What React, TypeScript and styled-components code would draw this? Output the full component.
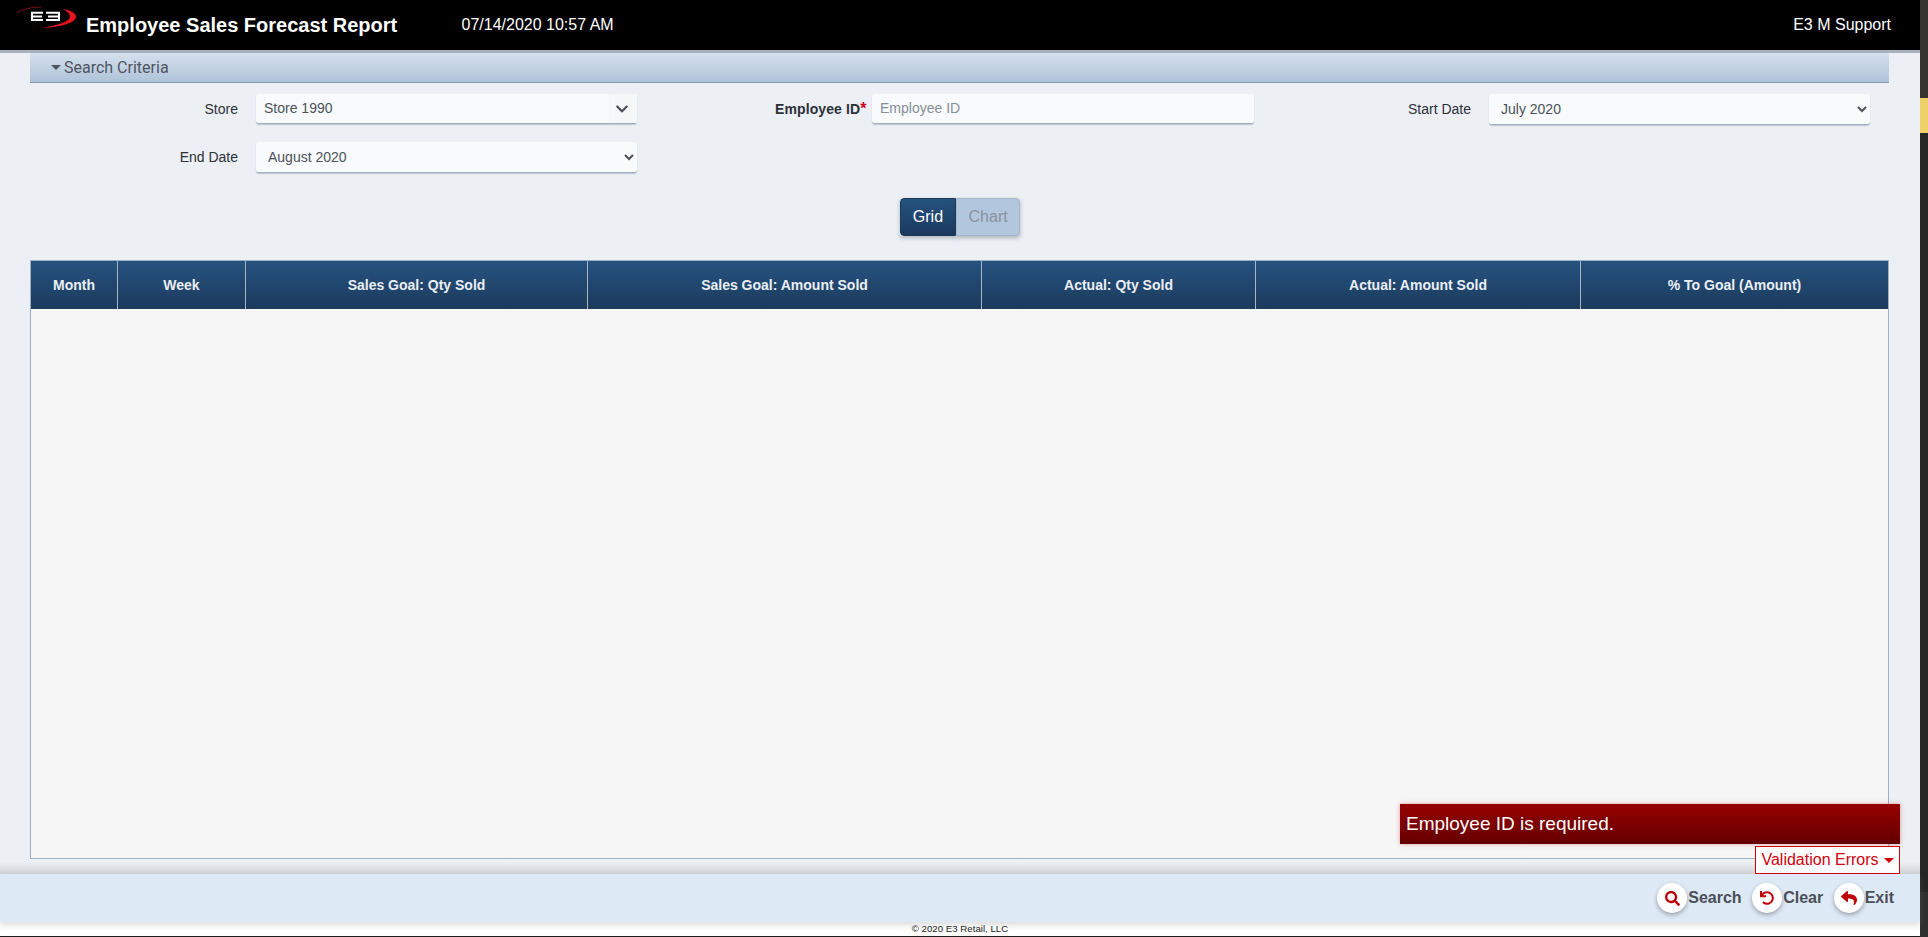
import React from "react";
import styled, { createGlobalStyle } from "styled-components";
import { FaChevronDown, FaSearch, FaUndo, FaReply } from "react-icons/fa";

const Global = createGlobalStyle`
  html, body { margin: 0; padding: 0; height: 100%; overflow: hidden; }
  body { font-family: "Liberation Sans", Arial, sans-serif; background: #fff; }
  #root { height: 100%; }
`;

const Shell = styled.div`
  display: flex;
  width: 1928px;
  height: 937px;
`;
const Page = styled.div`
  width: 1920px;
  display: flex;
  flex-direction: column;
  background: #eceff4;
  position: relative;
`;
const Gutter = styled.div`
  width: 8px;
  display: flex;
  flex-direction: column;
  background: #262626;
`;
const GutterTop = styled.div`
  height: 98px;
  background: #37352f;
`;
const GutterMark = styled.div`
  height: 35px;
  background: #f0d068;
`;
const GutterRest = styled.div`
  flex: 1;
`;
const GutterBottom = styled.div`
  height: 45px;
  background: #2f2f2f;
`;
const Header = styled.header`
  height: 50px;
  background: #000;
  border-bottom: 3px solid #a7b1bd;
  display: flex;
  align-items: center;
  color: #fff;
  flex: none;
  padding: 0 29px 0 17px;
`;
const LogoMark = styled.svg`
  width: 64px;
  height: 30px;
  margin-top: -12px;
  flex: none;
`;
const Title = styled.h1`
  margin: 0 0 0 5px;
  font-size: 20px;
  font-weight: 700;
  width: 375.5px;
  white-space: nowrap;
  flex: none;
`;
const Stamp = styled.div`
  font-size: 16px;
  margin-top: -1px;
  flex: 1;
`;
const UserName = styled.div`
  font-size: 16px;
  margin-top: -1px;
`;
const Accordion = styled.div`
  margin: 0 31px 0 30px;
  height: 30px;
  box-sizing: border-box;
  background: linear-gradient(#d5e0ec, #afc3d9);
  border-bottom: 1px solid #8499ad;
  border-radius: 2px 2px 0 0;
  display: flex;
  align-items: center;
  padding-left: 21px;
  font-family: Roboto, sans-serif;
  font-size: 16px;
  color: #4d5560;
  flex: none;
`;
const Caret = styled.span<{ $color: string }>`
  display: inline-block;
  width: 0;
  height: 0;
  border-left: 5px solid transparent;
  border-right: 5px solid transparent;
  border-top: 5px solid ${(p) => p.$color};
`;
const AccordionCaret = styled(Caret)`
  margin-right: 3px;
`;
const Form = styled.div`
  display: grid;
  grid-template-columns: repeat(3, 616.5px);
  grid-auto-rows: 30px;
  row-gap: 18px;
  padding: 11px 0 0 20.5px;
  flex: none;
`;
const Field = styled.div`
  display: flex;
  justify-content: flex-end;
  align-items: center;
`;
const Label = styled.label<{ $strong?: boolean }>`
  font-size: 14px;
  color: #2c3138;
  font-weight: ${(p) => (p.$strong ? 700 : 400)};
  margin-right: ${(p) => (p.$strong ? 5 : 18)}px;
  white-space: nowrap;
  letter-spacing: ${(p) => (p.$strong ? "0.1px" : "0")};
  display: flex;
  align-items: baseline;
`;
const Required = styled.span`
  color: #d0021b;
  font-size: 16px;
  line-height: 14px;
`;
const Control = styled.div`
  width: 381px;
  height: 30px;
  box-sizing: border-box;
  background: #f9fafc;
  border-bottom: 1px solid #a3afbc;
  border-radius: 3px;
  box-shadow: 0 1px 1px rgba(120, 135, 155, 0.4);
  display: flex;
  align-items: center;
  font-size: 14px;
  color: #4c525a;
`;
const ControlText = styled.span`
  flex: 1;
  padding-left: 8px;
  margin-top: -1px;
`;
const ArrowCell = styled.span`
  width: 28px;
  height: 100%;
  background: #f6f7f9;
  display: flex;
  align-items: center;
  justify-content: center;
  padding-right: 3px;
  box-sizing: border-box;
  color: #4c525a;
  font-size: 14px;
`;
const TextInput = styled.input`
  width: 382px;
  height: 30px;
  box-sizing: border-box;
  background: #f9fafc;
  border: 0;
  border-bottom: 1px solid #a3afbc;
  border-radius: 3px;
  box-shadow: 0 1px 1px rgba(120, 135, 155, 0.4);
  padding: 0 0 2px 8.5px;
  font: 14px "Liberation Sans", Arial, sans-serif;
  &::placeholder { color: #868e98; opacity: 1; }
`;
const NativeSelect = styled.select`
  width: 381px;
  height: 31px;
  box-sizing: border-box;
  background-color: #f9fafc;
  border: 0;
  border-bottom: 1px solid #a3afbc;
  border-radius: 3px;
  box-shadow: 0 1px 1px rgba(120, 135, 155, 0.4);
  padding-left: 8px;
  font: 14px "Liberation Sans", Arial, sans-serif;
  color: #4c525a;
`;
const ToggleRow = styled.div`
  display: flex;
  justify-content: center;
  margin: 26px 0 0 0;
  flex: none;
`;
const ToggleButton = styled.div<{ $active?: boolean }>`
  height: 38px;
  box-sizing: border-box;
  display: flex;
  align-items: center;
  padding: 0 ${(p) => (p.$active ? 12 : 11.5)}px;
  font-size: 16px;
  color: ${(p) => (p.$active ? "#fff" : "#8a929c")};
  background: ${(p) => (p.$active ? "linear-gradient(#25527f, #1a3a5d)" : "#b2c7de")};
  border: 1px solid ${(p) => (p.$active ? "#1c3a59" : "#a5b6c9")};
  border-radius: ${(p) => (p.$active ? "4px 0 0 4px" : "0 4px 4px 0")};
  box-shadow: 0 2px 4px rgba(60, 70, 85, 0.35);
`;
const TableFrame = styled.div`
  margin: 24px 31px 0 30px;
  height: 599px;
  box-sizing: border-box;
  background: #f6f6f6;
  border: 1px solid #9fb0c2;
  flex: none;
`;
const HeadRow = styled.div`
  height: 48px;
  display: grid;
  grid-template-columns: 87px 128px 342px 394px 274px 325px 1fr;
  background: linear-gradient(#265280, #1c3a5c);
`;
const HeadCell = styled.div`
  display: flex;
  align-items: center;
  justify-content: center;
  font-size: 14px;
  font-weight: 700;
  color: #e9eef4;
  border-right: 1px solid #a9b6c4;
  &:last-child { border-right: 0; }
`;
const Spacer = styled.div`
  height: 15px;
  flex: none;
  background: linear-gradient(#eceff4 20%, #cfd2d7);
`;
const ActionBar = styled.div`
  height: 48px;
  background: #dde9f5;
  display: flex;
  align-items: center;
  justify-content: flex-end;
  gap: 10.5px;
  padding-right: 26px;
  box-shadow: 0 3px 6px rgba(120, 120, 120, 0.25);
  position: relative;
  flex: none;
`;
const Action = styled.div`
  display: flex;
  align-items: center;
  font-size: 16px;
  font-weight: 700;
  color: #4a4f58;
  gap: 1px;
`;
const ActionIcon = styled.span<{ $size: number }>`
  width: 30px;
  height: 30px;
  border-radius: 50%;
  background: #fff;
  display: flex;
  align-items: center;
  justify-content: center;
  color: #c00008;
  font-size: ${(p) => p.$size}px;
  box-shadow: 0 2px 4px rgba(50, 50, 60, 0.4);
`;
const Copyright = styled.div`
  height: 14px;
  background: #fff;
  border-bottom: 1px solid #1c1c1c;
  font-size: 9.7px;
  color: #222;
  text-align: center;
  line-height: 14px;
  flex: none;
`;
const ErrorBanner = styled.div`
  position: absolute;
  left: 1400px;
  top: 804px;
  width: 500px;
  height: 40px;
  box-sizing: border-box;
  padding-left: 6px;
  display: flex;
  align-items: center;
  background: linear-gradient(#960000, #640000);
  color: #fff;
  font-size: 19px;
  box-shadow: 0 0 4px rgba(200, 60, 60, 0.5);
`;
const ErrorToggle = styled.div`
  position: absolute;
  left: 1755px;
  top: 846px;
  width: 145px;
  height: 28px;
  box-sizing: border-box;
  display: flex;
  align-items: center;
  justify-content: center;
  gap: 5px;
  background: #fff;
  border: 1px solid #d0000b;
  color: #d0000b;
  font-size: 16px;
  white-space: nowrap;
`;

const Logo = () => (
  <LogoMark viewBox="0 0 64 30">
    <path d="M0 9 C6 5 15 3 24 3" fill="none" stroke="#8c0f14" strokeWidth="0.9" />
    <path d="M45 5 C54 6 59 9 59 13 C59 18 46 23 26 24 C40 21 53 18 53 12.5 C53 9.5 50 7 45 5Z" fill="#e8141c" />
    <path d="M26 8.8H15V16H26M16 12.4H25M29 8.8H42V16H29M31 12.4H42" fill="none" stroke="#fff" strokeWidth="2" />
  </LogoMark>
);

const columns = ["Month", "Week", "Sales Goal: Qty Sold", "Sales Goal: Amount Sold", "Actual: Qty Sold", "Actual: Amount Sold", "% To Goal (Amount)"];

export default function App() {
  return (
    <Shell>
      <Global />
      <Page>
        <Header>
          <Logo />
          <Title>Employee Sales Forecast Report</Title>
          <Stamp>07/14/2020 10:57 AM</Stamp>
          <UserName>E3 M Support</UserName>
        </Header>
        <Accordion>
          <AccordionCaret $color="#4d5560" />
          Search Criteria
        </Accordion>
        <Form>
          <Field>
            <Label>Store</Label>
            <Control>
              <ControlText>Store 1990</ControlText>
              <ArrowCell><FaChevronDown /></ArrowCell>
            </Control>
          </Field>
          <Field>
            <Label $strong>Employee ID<Required>*</Required></Label>
            <TextInput placeholder="Employee ID" readOnly />
          </Field>
          <Field>
            <Label>Start Date</Label>
            <NativeSelect defaultValue="July 2020"><option>July 2020</option></NativeSelect>
          </Field>
          <Field>
            <Label>End Date</Label>
            <NativeSelect defaultValue="August 2020"><option>August 2020</option></NativeSelect>
          </Field>
        </Form>
        <ToggleRow>
          <ToggleButton $active>Grid</ToggleButton>
          <ToggleButton>Chart</ToggleButton>
        </ToggleRow>
        <TableFrame>
          <HeadRow>
            {columns.map((c) => <HeadCell key={c}>{c}</HeadCell>)}
          </HeadRow>
        </TableFrame>
        <Spacer />
        <ActionBar>
          <Action><ActionIcon $size={15}><FaSearch /></ActionIcon>Search</Action>
          <Action><ActionIcon $size={14}><FaUndo /></ActionIcon>Clear</Action>
          <Action><ActionIcon $size={16}><FaReply /></ActionIcon>Exit</Action>
        </ActionBar>
        <Copyright>© 2020 E3 Retail, LLC</Copyright>
        <ErrorBanner>Employee ID is required.</ErrorBanner>
        <ErrorToggle>Validation Errors <Caret $color="#d0000b" /></ErrorToggle>
      </Page>
      <Gutter>
        <GutterTop />
        <GutterMark />
        <GutterRest />
        <GutterBottom />
      </Gutter>
    </Shell>
  );
}
